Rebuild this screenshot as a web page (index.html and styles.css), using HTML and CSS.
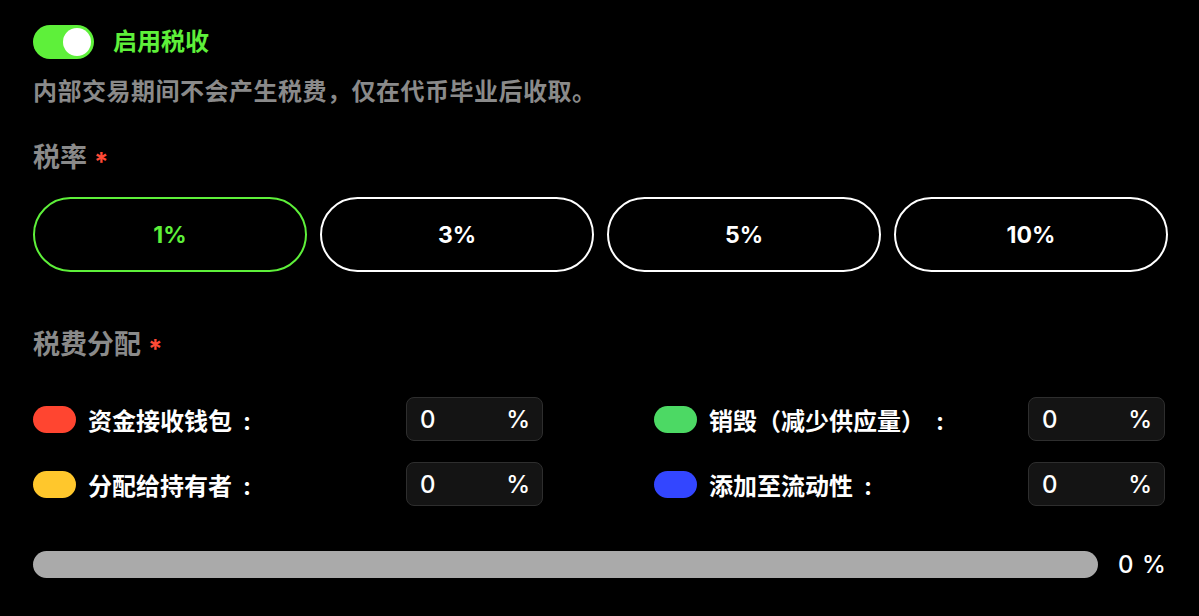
FILE: index.html
```html
<!DOCTYPE html>
<html lang="zh">
<head>
<meta charset="utf-8">
<link rel="stylesheet" href="styles.css">
</head>
<body>
<div class="page">
  <div class="toggle-row">
    <div class="toggle"><div class="knob"></div></div>
    <span class="toggle-label">启用税收</span>
  </div>
  <p class="desc">内部交易期间不会产生税费，仅在代币毕业后收取。</p>

  <div class="heading">税率<span class="req">*</span></div>
  <div class="rates">
    <div class="rate active">1%</div>
    <div class="rate">3%</div>
    <div class="rate">5%</div>
    <div class="rate">10%</div>
  </div>

  <div class="heading heading-dist">税费分配<span class="req">*</span></div>
  <div class="dist">
    <div class="dist-row">
      <span class="dot red"></span>
      <span class="dist-label">资金接收钱包<span class="colon">:</span></span>
      <div class="pct-input"><span>0</span><span>%</span></div>
    </div>
    <div class="dist-row">
      <span class="dot green"></span>
      <span class="dist-label">销毁（减少供应量）<span class="colon">:</span></span>
      <div class="pct-input"><span>0</span><span>%</span></div>
    </div>
    <div class="dist-row">
      <span class="dot yellow"></span>
      <span class="dist-label">分配给持有者<span class="colon">:</span></span>
      <div class="pct-input"><span>0</span><span>%</span></div>
    </div>
    <div class="dist-row">
      <span class="dot blue"></span>
      <span class="dist-label">添加至流动性<span class="colon">:</span></span>
      <div class="pct-input"><span>0</span><span>%</span></div>
    </div>
  </div>

  <div class="total-row">
    <div class="bar"></div>
    <span class="total">0 %</span>
  </div>
</div>
</body>
</html>
```
FILE: styles.css
```css
html, body {
  margin: 0;
  padding: 0;
  background: #000;
}
body {
  font-family: "Inter", "Noto Sans CJK SC", sans-serif;
  color: #fff;
}
.page {
  width: 1135px;
  padding: 25px 0 0 33px;
}
.toggle-row {
  display: flex;
  align-items: center;
  height: 34px;
}
.toggle {
  width: 61px;
  height: 34px;
  border-radius: 17px;
  background: #5ef03a;
  display: flex;
  align-items: center;
  justify-content: flex-end;
  padding: 0 3px;
  box-sizing: border-box;
}
.knob {
  width: 28px;
  height: 28px;
  border-radius: 50%;
  background: #fff;
}
.toggle-label {
  margin-left: 19px;
  font-size: 24px;
  font-weight: 700;
  color: #5ef03a;
  line-height: 34px;
}
.desc {
  margin: 16px 0 0;
  font-size: 24px;
  letter-spacing: 0.5px;
  line-height: 34px;
  font-weight: 700;
  color: #8a8a8a;
}
.heading {
  margin-top: 32px;
  font-size: 27px;
  line-height: 34px;
  font-weight: 700;
  color: #8a8a8a;
  display: flex;
  align-items: center;
}
.req {
  color: #ff4a36;
  margin-left: 7px;
  font-size: 26px;
  position: relative;
  top: 4px;
}
.rates {
  margin-top: 22px;
  display: grid;
  grid-template-columns: repeat(4, 1fr);
  column-gap: 13px;
}
.rate {
  height: 75px;
  border: 2px solid #fff;
  border-radius: 38px;
  box-sizing: border-box;
  display: flex;
  align-items: center;
  justify-content: center;
  font-size: 23px;
  font-weight: 700;
  color: #fff;
}
.rate.active {
  border-color: #5ef03a;
  color: #5ef03a;
}
.heading-dist {
  margin-top: 56px;
}
.dist {
  margin-top: 35px;
  display: grid;
  grid-template-columns: 510px 511px;
  column-gap: 111px;
  row-gap: 21px;
}
.dist-row {
  display: flex;
  align-items: center;
  height: 44px;
}
.dot {
  width: 43px;
  height: 27px;
  border-radius: 14px;
  flex: none;
}
.dot.red { background: #ff4530; }
.dot.yellow { background: #ffc72c; }
.dot.green { background: #4cd964; }
.dot.blue { background: #3346ff; }
.dist-label {
  margin-left: 12px;
  font-size: 24px;
  font-weight: 700;
  color: #fff;
  flex: 1;
}
.colon {
  margin-left: 11px;
}
.pct-input {
  width: 137px;
  height: 44px;
  box-sizing: border-box;
  background: #141414;
  border: 1px solid #2e2e2e;
  border-radius: 8px;
  display: flex;
  align-items: center;
  justify-content: space-between;
  padding: 0 12px 0 13px;
  font-size: 24px;
  font-weight: 500;
  color: #fff;
}
.total-row {
  margin-top: 41px;
  display: flex;
  align-items: center;
  height: 34px;
}
.bar {
  width: 1065px;
  height: 27px;
  border-radius: 14px;
  background: #aaaaaa;
}
.total {
  margin-left: 20px;
  font-size: 24px;
  font-weight: 500;
  word-spacing: 2px;
  color: #fff;
}
```
